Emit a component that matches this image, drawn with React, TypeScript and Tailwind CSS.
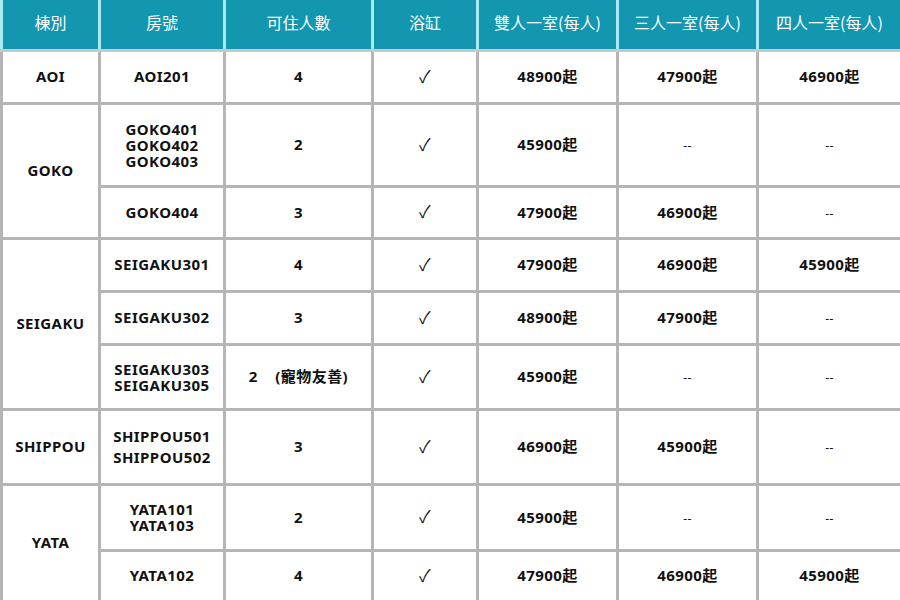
import React from "react";

const F = { fontFamily: '"Noto Sans", "Noto Sans CJK TC", sans-serif' };

type Cell = { t: React.ReactNode; span?: number; cls?: string };

const Check = () => <span className="font-normal text-[17px]">✓</span>;
const Dash = () => <span className="font-normal text-[12px]">--</span>;

export default function App() {
  const rows: { h: string; cells: Cell[] }[] = [
    {
      h: "h-[53px]",
      cells: [
        { t: "AOI" },
        { t: "AOI201" },
        { t: "4" },
        { t: <Check /> },
        { t: "48900起" },
        { t: "47900起" },
        { t: "46900起" },
      ],
    },
    {
      h: "h-[83px]",
      cells: [
        { t: "GOKO", span: 2 },
        { t: <div className="leading-[16px]">GOKO401<br />GOKO402<br />GOKO403</div> },
        { t: "2" },
        { t: <Check /> },
        { t: "45900起" },
        { t: <Dash /> },
        { t: <Dash /> },
      ],
    },
    {
      h: "h-[52px]",
      cells: [
        { t: "GOKO404" },
        { t: "3" },
        { t: <Check /> },
        { t: "47900起" },
        { t: "46900起" },
        { t: <Dash /> },
      ],
    },
    {
      h: "h-[53px]",
      cells: [
        { t: "SEIGAKU", span: 3 },
        { t: "SEIGAKU301" },
        { t: "4" },
        { t: <Check /> },
        { t: "47900起" },
        { t: "46900起" },
        { t: "45900起" },
      ],
    },
    {
      h: "h-[53px]",
      cells: [
        { t: "SEIGAKU302" },
        { t: "3" },
        { t: <Check /> },
        { t: "48900起" },
        { t: "47900起" },
        { t: <Dash /> },
      ],
    },
    {
      h: "h-[65px]",
      cells: [
        { t: <div className="leading-[16px]">SEIGAKU303<br />SEIGAKU305</div> },
        { t: <span className="whitespace-pre">2{"    "}(寵物友善)</span> },
        { t: <Check /> },
        { t: "45900起" },
        { t: <Dash /> },
        { t: <Dash /> },
      ],
    },
    {
      h: "h-[75px]",
      cells: [
        { t: "SHIPPOU" },
        { t: <div className="leading-[21px]">SHIPPOU501<br />SHIPPOU502</div> },
        { t: "3" },
        { t: <Check /> },
        { t: "46900起" },
        { t: "45900起" },
        { t: <Dash /> },
      ],
    },
    {
      h: "h-[66px]",
      cells: [
        { t: "YATA", span: 2 },
        { t: <div className="leading-[16px]">YATA101<br />YATA103</div> },
        { t: "2" },
        { t: <Check /> },
        { t: "45900起" },
        { t: <Dash /> },
        { t: <Dash /> },
      ],
    },
    {
      h: "h-[51px]",
      cells: [
        { t: "YATA102" },
        { t: "4" },
        { t: <Check /> },
        { t: "47900起" },
        { t: "46900起" },
        { t: "45900起" },
      ],
    },
  ];

  const heads = ["棟別", "房號", "可住人數", "浴缸", "雙人一室(每人)", "三人一室(每人)", "四人一室(每人)"];

  return (
    <div className="w-[900px] h-[600px] overflow-hidden bg-white" style={F}>
      <table className="table-fixed border-collapse w-[900px] text-[#111] text-[15px] font-bold">
        <colgroup>
          <col className="w-[98px]" />
          <col className="w-[125px]" />
          <col className="w-[148px]" />
          <col className="w-[105px]" />
          <col className="w-[140px]" />
          <col className="w-[140px]" />
          <col className="w-[144px]" />
        </colgroup>
        <thead>
          <tr className="h-[50px] bg-[#1397b0]">
            {heads.map((h, i) => (
              <th
                key={i}
                className="border-x-[3px] border-b-[3px] border-x-[#a9e9f0] border-b-[#c4c9cc] border-t-0 text-white font-normal text-[16px] pb-[4px]"
                style={{ fontFamily: '"Noto Sans CJK TC", "Noto Sans", sans-serif' }}
              >
                {h}
              </th>
            ))}
          </tr>
        </thead>
        <tbody>
          {rows.map((r, i) => (
            <tr key={i} className={r.h}>
              {r.cells.map((c, j) => (
                <td
                  key={j}
                  rowSpan={c.span}
                  className="border-[3px] border-[#b5b5b5] text-center align-middle p-0 tracking-[0.03em]"
                >
                  {c.t}
                </td>
              ))}
            </tr>
          ))}
        </tbody>
      </table>
    </div>
  );
}
